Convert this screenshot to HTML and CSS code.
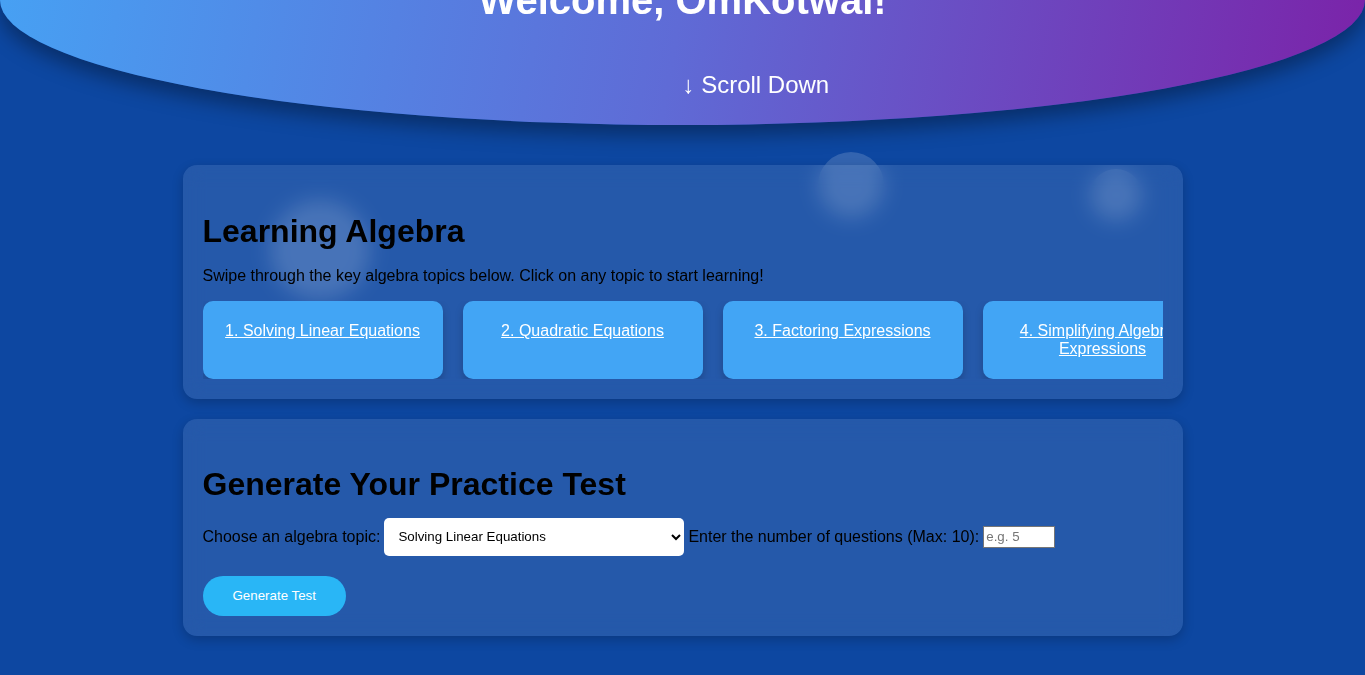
FILE: index.html
```html
<!DOCTYPE html>
<html lang="en">
<head>
<meta charset="utf-8">
<title>Algebra Learning</title>
<link rel="stylesheet" href="styles.css">
</head>
<body>
<header class="hero">
  <h1 class="hero-title">Welcome, OmKotwal!</h1>
  <div class="scroll-down">↓ Scroll Down</div>
</header>

<div class="bubble bubble-a"></div>
<div class="bubble bubble-b"></div>
<div class="bubble bubble-c"></div>

<main class="main">
  <section class="panel">
    <h2 class="panel-title">Learning Algebra</h2>
    <p class="panel-text">Swipe through the key algebra topics below. Click on any topic to start learning!</p>
    <div class="topics">
      <div class="topic"><a href="#">1. Solving Linear Equations</a></div>
      <div class="topic"><a href="#">2. Quadratic Equations</a></div>
      <div class="topic"><a href="#">3. Factoring Expressions</a></div>
      <div class="topic"><a href="#">4. Simplifying Algebraic Expressions</a></div>
      <div class="topic"><a href="#">5. Solving Inequalities</a></div>
    </div>
  </section>

  <section class="panel">
    <h2 class="panel-title panel-title-tight">Generate Your Practice Test</h2>
    <form class="test-form">
      <div class="form-row">
        <label for="topic">Choose an algebra topic:</label>
        <select id="topic" class="topic-select">
          <option>Solving Linear Equations</option>
          <option>Quadratic Equations</option>
          <option>Factoring Expressions</option>
          <option>Simplifying Algebraic Expressions</option>
        </select>
        <label for="count">Enter the number of questions (Max: 10):</label>
        <input id="count" class="count-input" type="number" placeholder="e.g. 5">
      </div>
      <button type="button" class="generate-btn">Generate Test</button>
    </form>
  </section>
</main>
</body>
</html>
```

FILE: styles.css
```css
html, body {
  margin: 0;
  padding: 0;
}

body {
  background: #0d47a1;
  font-family: "Liberation Sans", Arial, sans-serif;
  color: #000;
  overflow: hidden;
  position: relative;
  min-height: 675px;
}

.hero {
  position: relative;
  height: 250px;
  margin-top: -125px;
  background: linear-gradient(100deg, #46a2f4 0%, #5f6bd6 50%, #7b22a8 100%);
  border-radius: 0 0 50% 50%;
  box-shadow: 0 10px 20px rgba(0, 0, 0, 0.35);
  display: flex;
  align-items: center;
  justify-content: center;
  color: #fff;
  z-index: 2;
}

.hero-title {
  margin: 0;
  font-size: 40px;
  font-weight: bold;
  line-height: 46px;
}

.scroll-down {
  position: absolute;
  left: 50%;
  bottom: 26px;
  font-size: 24px;
  line-height: 28px;
  color: #fff;
}

.bubble {
  position: absolute;
  border-radius: 50%;
  background: rgba(255, 255, 255, 0.16);
  z-index: 0;
}

.bubble-a {
  left: 270px;
  top: 200px;
  width: 100px;
  height: 100px;
}

.bubble-b {
  left: 818px;
  top: 152px;
  width: 66px;
  height: 66px;
}

.bubble-c {
  left: 1090px;
  top: 169px;
  width: 52px;
  height: 52px;
}

.main {
  position: relative;
  z-index: 1;
  padding-top: 40px;
}

.panel {
  width: 1000px;
  box-sizing: border-box;
  margin: 0 auto 20px;
  padding: 20px;
  background: rgba(255, 255, 255, 0.1);
  backdrop-filter: blur(10px);
  border-radius: 14px;
  box-shadow: 0 4px 12px rgba(0, 0, 0, 0.2);
}

.panel-title {
  margin: 27.5px 0 16px;
  font-size: 32px;
  font-weight: bold;
  line-height: 37px;
}

.panel-title-tight {
  margin: 26.6px 0 15px;
}

.panel-text {
  margin: 0 0 16px;
  padding-top: 1px;
  font-size: 16px;
  line-height: 18.4px;
}

.topics {
  display: flex;
  gap: 20px;
  overflow-x: auto;
  scrollbar-width: none;
}

.topic {
  flex: 0 0 240px;
  box-sizing: border-box;
  min-height: 78px;
  padding: 21px 20px 20px;
  background: #42a5f5;
  border-radius: 10px;
  box-shadow: 0 4px 8px rgba(0, 0, 0, 0.2);
  text-align: center;
  line-height: 18.4px;
}

.topic a {
  color: #fff;
  text-decoration: underline;
  font-size: 16px;
}

.test-form {
  display: flex;
  flex-direction: column;
  align-items: flex-start;
  gap: 20px;
}

.form-row {
  display: flex;
  align-items: center;
  gap: 4px;
  font-size: 16px;
}

.topic-select {
  width: 300px;
  height: 38px;
  box-sizing: border-box;
  padding: 0 10px;
  border: none;
  border-radius: 5px;
  background: #fff;
  font-family: "Liberation Sans", Arial, sans-serif;
  font-size: 13.33px;
  color: #000;
}

.count-input {
  width: 72px;
  height: 22px;
  box-sizing: border-box;
  padding: 1px 2px;
  border: 1px solid #767676;
  background: #fff;
  font-family: "Liberation Sans", Arial, sans-serif;
  font-size: 13.33px;
  -moz-appearance: textfield;
}

.count-input::-webkit-outer-spin-button,
.count-input::-webkit-inner-spin-button {
  -webkit-appearance: none;
  margin: 0;
}

.generate-btn {
  height: 40px;
  padding: 0 30px;
  border: none;
  border-radius: 20px;
  background: #29b6f6;
  color: #fff;
  font-family: "Liberation Sans", Arial, sans-serif;
  font-size: 13.33px;
  cursor: pointer;
}
```
